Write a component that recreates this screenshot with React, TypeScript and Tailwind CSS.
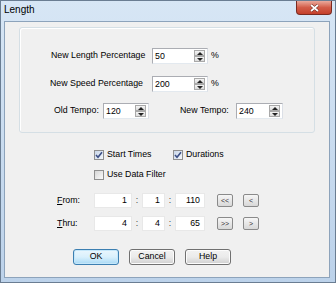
import { ReactNode } from "react";

function SpinArrow({ up }: { up?: boolean }) {
  return (
    <div className="flex-1 flex items-center justify-center bg-gradient-to-b from-[#f4f4f4] to-[#dcdcdc] border border-[#a9a9a9]">
      {up ? (
        <div className="w-0 h-0 border-x-[3px] border-x-transparent border-b-[3px] border-b-[#222]" />
      ) : (
        <div className="w-0 h-0 border-x-[3px] border-x-transparent border-t-[3px] border-t-[#222]" />
      )}
    </div>
  );
}

function Spin({ value, w }: { value: string; w: string }) {
  return (
    <div className={`flex h-[16px] ${w} bg-white border border-[#abadb3] border-r-[#dbdfe6] border-b-[#e3e9ef]`}>
      <span className="flex-1 pl-[2px] leading-[14px]">{value}</span>
      <div className="flex flex-col w-[11px] my-[1px] mr-[2px]">
        <SpinArrow up />
        <SpinArrow />
      </div>
    </div>
  );
}

function Field({ value, w }: { value: string; w: string }) {
  return (
    <div className={`h-[15px] ${w} bg-white border border-[#e8e8e8] text-right pr-[4px] leading-[13px]`}>
      {value}
    </div>
  );
}

function Check({ checked, children }: { checked?: boolean; children: ReactNode }) {
  return (
    <div className="flex items-center h-[14px]">
      <div
        className={`w-[10px] h-[10px] border border-[#8f8f8f] flex items-center justify-center ${
          checked
            ? "bg-gradient-to-br from-[#c9d6e8] to-[#f4f8fc]"
            : "bg-gradient-to-br from-[#d6d6d6] to-[#fafafa]"
        }`}
      >
        {checked && (
          <svg width="8" height="8" viewBox="0 0 8 8">
            <path d="M1 4 L3 6.2 L7 1.2" fill="none" stroke="#3c4f86" strokeWidth="1.6" />
          </svg>
        )}
      </div>
      <span className="ml-[3px]">{children}</span>
    </div>
  );
}

function Btn({ children, primary }: { children: ReactNode; primary?: boolean }) {
  return (
    <div
      className={`w-[46px] h-[16px] rounded-[3px] border flex items-center justify-center ${
        primary
          ? "border-[#3c7fb1] bg-gradient-to-b from-[#eaf6fd] via-[#d9f0fc] to-[#a7d9f5] shadow-[inset_0_0_0_1px_#c5e7fa]"
          : "border-[#707070] bg-gradient-to-b from-[#f2f2f2] via-[#ebebeb] to-[#cfcfcf] shadow-[inset_0_0_0_1px_#fcfcfc]"
      }`}
    >
      {children}
    </div>
  );
}

function Nav({ label }: { label: string }) {
  return (
    <div className="w-[16px] h-[13px] rounded-[2px] border border-[#8a8a8a] bg-gradient-to-b from-[#f6f6f6] to-[#d8d8d8] flex items-center justify-center text-[7px] text-[#333] leading-none">
      {label}
    </div>
  );
}

function Colon() {
  return <span className="w-[10px] text-center text-[#444]">:</span>;
}

export default function App() {
  return (
    <div
      className="w-[336px] h-[283px] flex flex-col bg-gradient-to-b from-[#d7e6f5] to-[#bcd2ea] border border-[#6a7d92] text-black"
      style={{ fontFamily: '"Liberation Sans", Arial, sans-serif' }}
    >
      <div className="h-[20px] flex items-start justify-between">
        <span className="pl-[3px] pt-[2px] text-[10px] leading-[14px]">Length</span>
        <div className="w-[36px] h-[14px] mr-[3px] rounded-b-[4px] border border-t-0 border-[#7a2a20] bg-gradient-to-b from-[#e9a99c] via-[#d25c48] to-[#c4402b] flex items-center justify-center">
          <svg width="9" height="8" viewBox="0 0 9 8">
            <path d="M1 1 L8 7 M8 1 L1 7" stroke="#5a1d15" strokeWidth="2.8" />
            <path d="M1 1 L8 7 M8 1 L1 7" stroke="#fff" strokeWidth="1.8" />
          </svg>
        </div>
      </div>

      <div className="flex-1 ml-[3px] mr-[5px] mb-[4px] bg-[#f0f0f0] border border-[#8da3bb] text-[8.8px] flex flex-col">
        <div className="mt-[5px] ml-[14px] w-[296px] h-[106px] rounded-[3px] border border-[#d5dfe5] shadow-[inset_1px_1px_0_#fff] flex flex-col">
          <div className="mt-[20px] ml-[31px] flex items-center">
            <span className="w-[101px]">New Length Percentage</span>
            <Spin value="50" w="w-[56px]" />
            <span className="ml-[3px]">%</span>
          </div>
          <div className="mt-[12px] ml-[30px] flex items-center">
            <span className="w-[102px]">New Speed Percentage</span>
            <Spin value="200" w="w-[56px]" />
            <span className="ml-[3px]">%</span>
          </div>
          <div className="mt-[11px] ml-[34px] flex items-center">
            <span className="w-[49px]">Old Tempo:</span>
            <Spin value="120" w="w-[46px]" />
            <span className="ml-[31px] w-[56px]">New Tempo:</span>
            <Spin value="240" w="w-[47px]" />
          </div>
        </div>

        <div className="mt-[15px] ml-[89px] flex">
          <div className="w-[79px]">
            <Check checked>Start Times</Check>
          </div>
          <Check checked>Durations</Check>
        </div>
        <div className="mt-[6px] ml-[89px]">
          <Check>Use Data Filter</Check>
        </div>

        <div className="mt-[11px] ml-[52px] flex items-center">
          <span className="w-[37px]">
            <span className="underline">F</span>rom:
          </span>
          <Field value="1" w="w-[38px]" />
          <Colon />
          <Field value="1" w="w-[23px]" />
          <Colon />
          <Field value="110" w="w-[30px]" />
          <div className="ml-[12px]">
            <Nav label="<<" />
          </div>
          <div className="ml-[10px]">
            <Nav label="<" />
          </div>
        </div>
        <div className="mt-[8px] ml-[52px] flex items-center">
          <span className="w-[37px]">
            <span className="underline">T</span>hru:
          </span>
          <Field value="4" w="w-[38px]" />
          <Colon />
          <Field value="4" w="w-[23px]" />
          <Colon />
          <Field value="65" w="w-[30px]" />
          <div className="ml-[12px]">
            <Nav label=">>" />
          </div>
          <div className="ml-[10px]">
            <Nav label=">" />
          </div>
        </div>

        <div className="mt-[18px] ml-[68px] flex gap-[10px]">
          <Btn primary>OK</Btn>
          <Btn>Cancel</Btn>
          <Btn>Help</Btn>
        </div>
      </div>
    </div>
  );
}
